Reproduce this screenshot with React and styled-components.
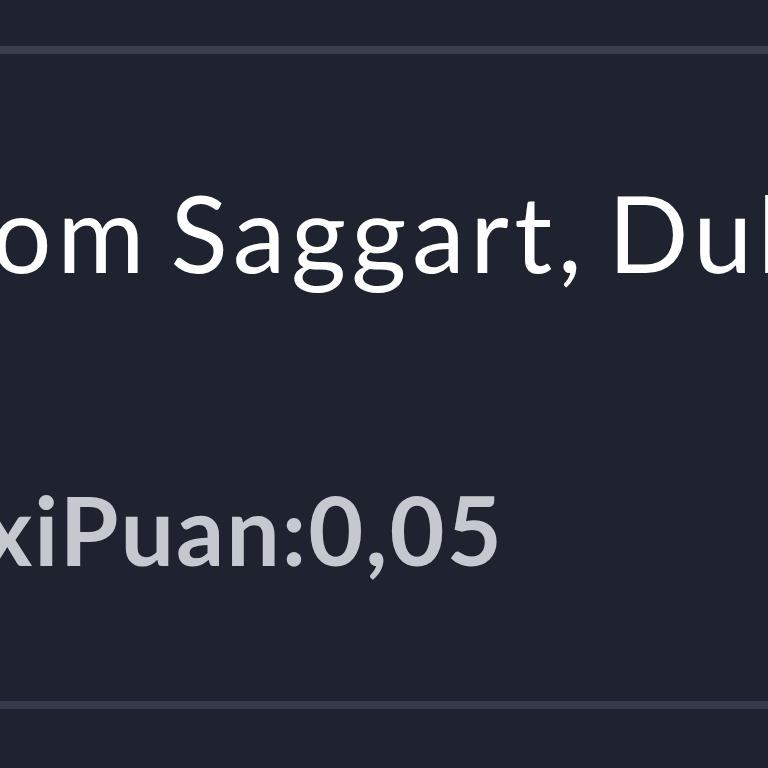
import React from "react";
import styled, { createGlobalStyle } from "styled-components";

const Global = createGlobalStyle`
  html, body { margin: 0; padding: 0; background: #1f2330; }
  body { width: 768px; height: 768px; overflow: hidden; font-family: "Lato", "Open Sans", sans-serif; }
`;

const Screen = styled.div`
  width: 768px;
  height: 768px;
  overflow: hidden;
  background: #1f2330;
  display: flex;
  flex-direction: column;
  padding-top: 46px;
  box-sizing: border-box;
`;

const Card = styled.section`
  border-top: 8px solid #3b3e4d;
  border-bottom: 8px solid #363a4a;
  height: 663px;
  box-sizing: border-box;
  display: flex;
  flex-direction: column;
`;

const Title = styled.h1`
  margin: 125px 0 0 ${(p) => p.$shift}px;
  white-space: nowrap;
  font-family: "Lato", sans-serif;
  font-weight: 400;
  font-size: 106px;
  line-height: 106px;
  letter-spacing: 5.5px;
  word-spacing: -12px;
  color: #ffffff;
`;

const Score = styled.div`
  margin: 197px 0 0 ${(p) => p.$shift}px;
  white-space: nowrap;
  font-family: "Lato", sans-serif;
  font-weight: 700;
  font-size: 95px;
  line-height: 95px;
  letter-spacing: 2px;
  color: #c6c8cf;
`;

export default function App() {
  return (
    <>
      <Global />
      <Screen>
        <Card>
          <Title $shift={-93}>from Saggart, Dublin</Title>
          <Score $shift={-116}>TaxiPuan:0,05</Score>
        </Card>
      </Screen>
    </>
  );
}
